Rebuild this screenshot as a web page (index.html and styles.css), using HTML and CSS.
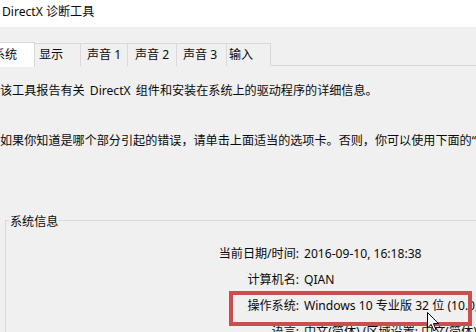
FILE: index.html
```html
<!DOCTYPE html>
<html lang="zh-CN">
<head>
<meta charset="utf-8">
<title>DirectX 诊断工具</title>
<link rel="stylesheet" href="styles.css">
</head>
<body>
<div class="window">
  <div class="titlebar">DirectX 诊断工具</div>
  <div class="tabs">
    <div class="tab active">系统</div>
    <div class="tab t2">显示</div>
    <div class="tab t3">声音 1</div>
    <div class="tab t4">声音 2</div>
    <div class="tab t5">声音 3</div>
    <div class="tab t6">输入</div>
  </div>
  <div class="content">
    <p class="line first">该工具报告有关 DirectX 组件和安装在系统上的驱动程序的详细信息。</p>
    <p class="line second">如果你知道是哪个部分引起的错误，请单击上面适当的选项卡。否则，你可以使用下面的“下一页”按钮按顺序访问每一页。</p>
    <div class="group">
      <div class="legend">系统信息</div>
      <div class="rows">
        <div class="label">当前日期/时间:</div><div class="value">2016-09-10, 16:18:38</div>
        <div class="label">计算机名:</div><div class="value">QIAN</div>
        <div class="label">操作系统:</div><div class="value">Windows 10 专业版 32 位 (10.0, 内部版本 10586)</div>
        <div class="label">语言:</div><div class="value">中文(简体) (区域设置: 中文(简体))</div>
      </div>
    </div>
  </div>
</div>
<div class="highlight"></div>
<svg class="cursor" width="13" height="20" viewBox="0 0 13 20">
  <path d="M0.5 0.5 L0.5 16 L4.2 12.4 L6.8 18.6 L9 17.6 L6.5 11.6 L11.5 11.6 Z" fill="#fff" stroke="#000" stroke-width="1" stroke-linejoin="round"/>
</svg>
</body>
</html>
```
FILE: styles.css
```css
html, body {
  margin: 0;
  padding: 0;
}
body {
  width: 476px;
  height: 332px;
  overflow: hidden;
  position: relative;
  background: #f0f0f0;
  font-family: "Noto Sans", "Noto Sans CJK SC", "Microsoft YaHei", sans-serif;
  font-size: 12.1px;
  color: #0a0a0a;
}
.window {
  width: 476px;
}
.titlebar {
  height: 27px;
  line-height: 24px;
  background: #fff;
  padding-left: 2px;
  white-space: nowrap;
}
.tabs {
  display: flex;
  margin-top: 15px;
  margin-left: -12px;
  height: 24px;
  border-bottom: 1px solid #d9d9d9;
  width: 488px;
  box-sizing: border-box;
}
.tab {
  box-sizing: border-box;
  margin-top: 1px;
  height: 23px;
  line-height: 22px;
  border: 1px solid #d9d9d9;
  border-bottom: none;
  border-left: none;
  background: #f0f0f0;
  white-space: nowrap;
}
.tab.active {
  margin-top: 0;
  height: 25px;
  line-height: 24px;
  width: 47px;
  padding-left: 4px;
  background: #fff;
  border-left: 1px solid #d9d9d9;
  position: relative;
  z-index: 1;
}
.t2 { width: 46px; padding-left: 4px; }
.t3 { width: 47px; padding-left: 6px; }
.t4 { width: 49px; padding-left: 7px; }
.t5 { width: 50px; padding-left: 6px; }
.t6 { width: 44px; padding-left: 2px; }
.content {
  padding-top: 16px;
}
.line {
  margin: 0;
  line-height: 18px;
  white-space: nowrap;
}
.first {
  word-spacing: 2px;
}
.second {
  margin-top: 32px;
}
.group {
  margin-top: 70px;
  margin-left: 5px;
  border-top: 1px solid #d8d8d8;
  border-left: 1px solid #d8d8d8;
  height: 200px;
}
.legend {
  display: inline-block;
  margin-top: -8px;
  margin-left: 3px;
  padding: 0 1px;
  line-height: 18px;
  background: #f0f0f0;
  vertical-align: top;
}
.rows {
  display: grid;
  grid-template-columns: 293px auto;
  column-gap: 5px;
  row-gap: 8px;
  margin-top: 7px;
  line-height: 18px;
  white-space: nowrap;
}
.label {
  text-align: right;
}
.highlight {
  position: absolute;
  left: 229px;
  top: 291px;
  width: 243px;
  height: 35px;
  box-sizing: border-box;
  border: 4px solid #c94f4f;
}
.cursor {
  position: absolute;
  left: 427px;
  top: 312px;
}
```
